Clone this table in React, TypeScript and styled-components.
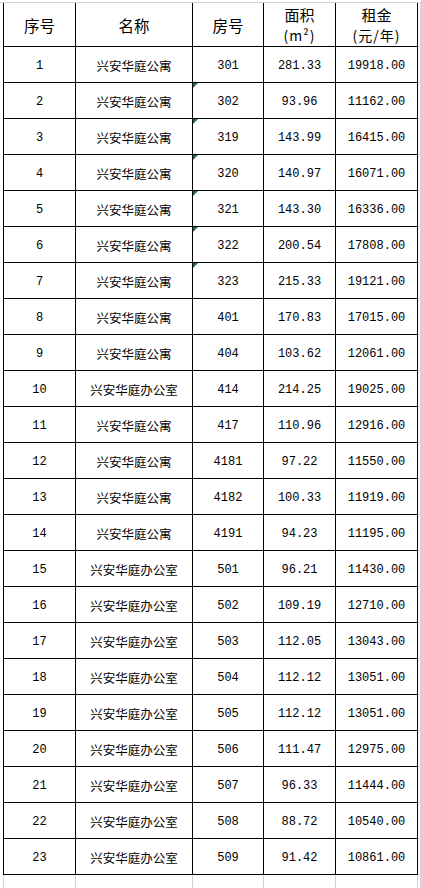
import React from "react";
import styled, { createGlobalStyle } from "styled-components";

const GlobalStyle = createGlobalStyle`
  html, body {
    margin: 0;
    padding: 0;
    background: #ffffff;
  }
`;

const CJK = `"Noto Sans CJK SC", "Noto Sans", sans-serif`;
const MONO = `"Liberation Mono", "Noto Sans CJK SC", monospace`;

const rows: [number, string, string, string, string, boolean][] = [
  [1, "兴安华庭公寓", "301", "281.33", "19918.00", false],
  [2, "兴安华庭公寓", "302", "93.96", "11162.00", true],
  [3, "兴安华庭公寓", "319", "143.99", "16415.00", true],
  [4, "兴安华庭公寓", "320", "140.97", "16071.00", true],
  [5, "兴安华庭公寓", "321", "143.30", "16336.00", true],
  [6, "兴安华庭公寓", "322", "200.54", "17808.00", true],
  [7, "兴安华庭公寓", "323", "215.33", "19121.00", true],
  [8, "兴安华庭公寓", "401", "170.83", "17015.00", false],
  [9, "兴安华庭公寓", "404", "103.62", "12061.00", false],
  [10, "兴安华庭办公室", "414", "214.25", "19025.00", false],
  [11, "兴安华庭公寓", "417", "110.96", "12916.00", false],
  [12, "兴安华庭公寓", "4181", "97.22", "11550.00", false],
  [13, "兴安华庭公寓", "4182", "100.33", "11919.00", false],
  [14, "兴安华庭公寓", "4191", "94.23", "11195.00", false],
  [15, "兴安华庭办公室", "501", "96.21", "11430.00", false],
  [16, "兴安华庭办公室", "502", "109.19", "12710.00", false],
  [17, "兴安华庭办公室", "503", "112.05", "13043.00", false],
  [18, "兴安华庭办公室", "504", "112.12", "13051.00", false],
  [19, "兴安华庭办公室", "505", "112.12", "13051.00", false],
  [20, "兴安华庭办公室", "506", "111.47", "12975.00", false],
  [21, "兴安华庭办公室", "507", "96.33", "11444.00", false],
  [22, "兴安华庭办公室", "508", "88.72", "10540.00", false],
  [23, "兴安华庭办公室", "509", "91.42", "10861.00", false],
];

// column widths incl. right border; last one is the next sheet column peeking in
const COLS = "72px 117px 71px 72px 82px 3px";

const Sheet = styled.div`
  width: 421px;
  height: 888px;
  overflow: hidden;
  background: #fff;
  padding-top: 2px;
  box-sizing: border-box;
`;

const Table = styled.div`
  border-top: 1px solid #d4d4d4;
  padding-left: 3px;
`;

const Row = styled.div<{ $head?: boolean; $ghost?: boolean }>`
  display: grid;
  grid-template-columns: ${COLS};
  height: ${({ $head, $ghost }) => ($head ? "44px" : $ghost ? "20px" : "36px")};
  border-left: 1px solid ${({ $ghost }) => ($ghost ? "#d4d4d4" : "#000")};
  box-sizing: border-box;
`;

const Cell = styled.div<{ $ghost?: boolean; $font?: "cjk" | "mono" | "head" }>`
  position: relative;
  display: flex;
  align-items: center;
  justify-content: center;
  flex-direction: column;
  box-sizing: border-box;
  border-right: 1px solid ${({ $ghost }) => ($ghost ? "#d4d4d4" : "#000")};
  border-bottom: ${({ $ghost }) => ($ghost ? "none" : "1px solid #000")};
  color: #000;
  padding-top: ${({ $font }) => ($font === "head" ? "1px" : "3px")};
  font-family: ${({ $font }) => ($font === "mono" ? MONO : CJK)};
  font-size: ${({ $font }) =>
    $font === "head" ? "15.5px" : $font === "mono" ? "12px" : "12.5px"};
  line-height: 14px;
  white-space: nowrap;
`;

const HeadLine = styled.span<{ $sub?: boolean }>`
  display: block;
  font-size: ${({ $sub }) => ($sub ? "14px" : "15px")};
  line-height: 21px;
  height: 21px;
  letter-spacing: ${({ $sub }) => ($sub ? "1px" : "0")};
`;

const EdgeCell = styled.div<{ $ghost?: boolean }>`
  box-sizing: border-box;
  border-right: 1px solid #d4d4d4;
  border-bottom: ${({ $ghost }) => ($ghost ? "none" : "1px solid #d4d4d4")};
`;

const TextFlag = styled.span`
  position: absolute;
  top: 0;
  left: 0;
  width: 0;
  height: 0;
  border-top: 5px solid #1f6e43;
  border-right: 5px solid transparent;
`;

export default function App() {
  return (
    <>
      <GlobalStyle />
      <Sheet>
        <Table>
          <Row $head>
            <Cell $font="head">序号</Cell>
            <Cell $font="head">名称</Cell>
            <Cell $font="head">房号</Cell>
            <Cell $font="head">
              <HeadLine>面积</HeadLine>
              <HeadLine $sub>(m²)</HeadLine>
            </Cell>
            <Cell $font="head">
              <HeadLine>租金</HeadLine>
              <HeadLine $sub>(元/年)</HeadLine>
            </Cell>
            <EdgeCell />
          </Row>
          {rows.map(([n, name, room, area, rent, flag]) => (
            <Row key={n}>
              <Cell $font="mono">{n}</Cell>
              <Cell $font="cjk">{name}</Cell>
              <Cell $font="mono">
                {flag && <TextFlag />}
                {room}
              </Cell>
              <Cell $font="mono">{area}</Cell>
              <Cell $font="mono">{rent}</Cell>
              <EdgeCell />
            </Row>
          ))}
          <Row $ghost>
            <Cell $ghost />
            <Cell $ghost />
            <Cell $ghost />
            <Cell $ghost />
            <Cell $ghost />
            <EdgeCell $ghost />
          </Row>
        </Table>
      </Sheet>
    </>
  );
}
